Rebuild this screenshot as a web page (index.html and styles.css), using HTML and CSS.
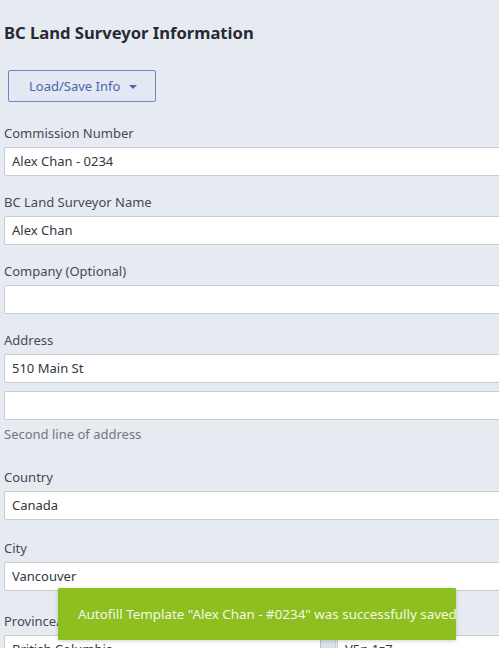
FILE: index.html
```html
<!DOCTYPE html>
<html lang="en">
<head>
<meta charset="utf-8">
<title>BC Land Surveyor Information</title>
<link rel="stylesheet" href="styles.css">
</head>
<body>
<div class="app">
  <h1 class="title">BC Land Surveyor Information</h1>
  <button class="menu-btn" type="button">Load/Save Info <span class="caret"></span></button>

  <div class="field first">
    <label class="label">Commission Number</label>
    <div class="input">Alex Chan - 0234</div>
  </div>
  <div class="field">
    <label class="label">BC Land Surveyor Name</label>
    <div class="input">Alex Chan</div>
  </div>
  <div class="field">
    <label class="label">Company (Optional)</label>
    <div class="input"></div>
  </div>
  <div class="field">
    <label class="label">Address</label>
    <div class="input">510 Main St</div>
    <div class="input second"></div>
    <div class="help">Second line of address</div>
  </div>
  <div class="field after-help">
    <label class="label">Country</label>
    <div class="input">Canada</div>
  </div>
  <div class="field city">
    <label class="label">City</label>
    <div class="input">Vancouver</div>
  </div>
  <div class="field province">
    <label class="label">Province/State</label>
    <div class="row">
      <div class="select"><span class="select-text">British Columbia</span><span class="select-arrow"></span></div>
      <div class="input postal">V5n 1z7</div>
    </div>
  </div>

  <div class="toast">Autofill Template "Alex Chan - #0234" was successfully saved.</div>
</div>
</body>
</html>
```

FILE: styles.css
```css
html, body {
  margin: 0;
  padding: 0;
  background: #ffffff;
}

.app {
  position: relative;
  height: 648px;
  overflow: hidden;
  background: #e6eaf1;
  padding: 0 0 0 4px;
  font-family: "Noto Sans", "Open Sans", sans-serif;
  font-size: 13px;
  color: #3d4147;
  box-sizing: border-box;
}

.title {
  margin: 0;
  padding-top: 21px;
  font-size: 16.6px;
  line-height: 24px;
  font-weight: 700;
  color: #262b33;
}

.menu-btn {
  display: flex;
  align-items: center;
  gap: 9px;
  margin: 25px 0 0 4px;
  width: 148px;
  height: 32px;
  padding: 0 0 0 20px;
  box-sizing: border-box;
  background: #e3e8f2;
  border: 1px solid #6d88c8;
  border-radius: 2px;
  font-family: "Noto Sans", "Open Sans", sans-serif;
  font-size: 13px;
  color: #4a66ad;
  cursor: pointer;
}

.caret {
  width: 0;
  height: 0;
  border-left: 4px solid transparent;
  border-right: 4px solid transparent;
  border-top: 4px solid #4a66ad;
  margin-top: 1px;
}

.field {
  margin-top: 17px;
  width: 540px;
}

.field.first {
  margin-top: 22px;
}

.field.after-help {
  margin-top: 25px;
}

.field.city {
  margin-top: 19px;
}

.field.province {
  margin-top: 21px;
}

.label {
  display: block;
  line-height: 18px;
  margin-bottom: 5px;
  color: #474b51;
}

.input {
  height: 29px;
  box-sizing: border-box;
  background: #ffffff;
  border: 1px solid #c8cdd5;
  border-radius: 2px;
  padding: 0 7px;
  line-height: 27px;
  color: #33373d;
}

.input.second {
  margin-top: 8px;
}

.help {
  line-height: 18px;
  margin-top: 5px;
  color: #73777d;
}

.row {
  display: flex;
}

.select {
  display: flex;
  width: 332px;
  height: 29px;
  box-sizing: border-box;
  background: #ffffff;
  border: 1px solid #c8cdd5;
  border-radius: 2px;
  line-height: 27px;
  color: #33373d;
}

.select-text {
  flex: 1;
  padding: 0 7px;
}

.select-arrow {
  width: 14px;
  background: #dde2ea;
  border-left: 1px solid #bcc2cb;
}

.postal {
  flex: 1;
  margin-left: 1px;
}

.toast {
  position: absolute;
  left: 58px;
  top: 588px;
  width: 398px;
  height: 52px;
  box-sizing: border-box;
  padding-left: 20px;
  display: flex;
  align-items: center;
  white-space: nowrap;
  background: #8cbf1f;
  color: #f3f8e6;
  font-size: 13.4px;
  border-radius: 1px;
  box-shadow: 0 1px 4px rgba(0, 0, 0, 0.18);
}
```
